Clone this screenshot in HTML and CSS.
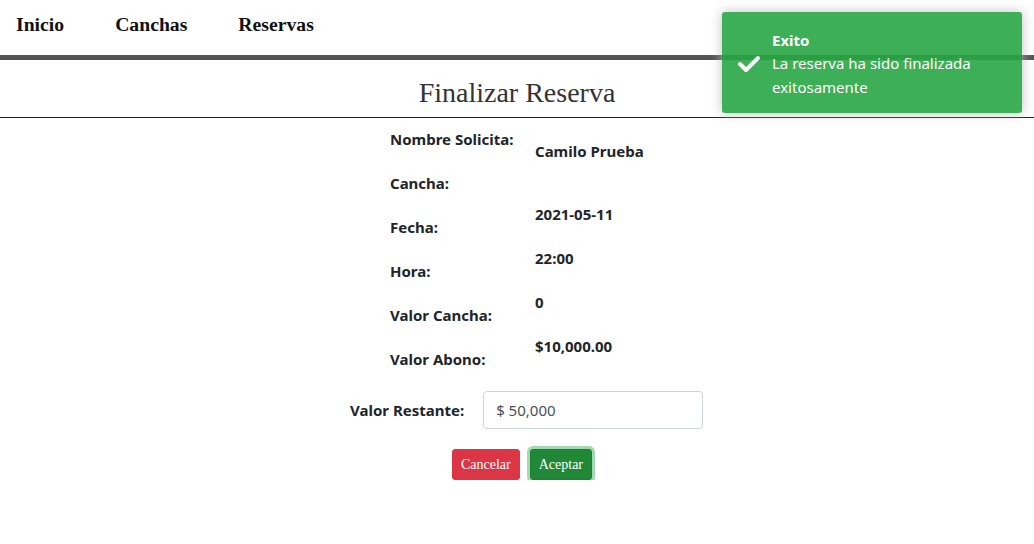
FILE: index.html
```html
<!DOCTYPE html>
<html lang="es">
<head>
<meta charset="utf-8">
<title>Finalizar Reserva</title>
<link rel="stylesheet" href="styles.css">
</head>
<body>
<nav class="nav">
  <a class="nav-link" href="#">Inicio</a>
  <a class="nav-link" href="#">Canchas</a>
  <a class="nav-link" href="#">Reservas</a>
</nav>
<h2 class="title">Finalizar Reserva</h2>
<section class="details">
  <div class="row row-first">
    <span class="label">Nombre Solicita:</span>
    <span class="value">Camilo Prueba</span>
  </div>
  <div class="row row-second">
    <span class="label">Cancha:</span>
    <span class="value"></span>
  </div>
  <div class="row">
    <span class="label">Fecha:</span>
    <span class="value">2021-05-11</span>
  </div>
  <div class="row">
    <span class="label">Hora:</span>
    <span class="value">22:00</span>
  </div>
  <div class="row">
    <span class="label">Valor Cancha:</span>
    <span class="value">0</span>
  </div>
  <div class="row">
    <span class="label">Valor Abono:</span>
    <span class="value">$10,000.00</span>
  </div>
</section>
<div class="rest">
  <label class="rest-label" for="rest">Valor Restante:</label>
  <input class="rest-input" id="rest" type="text" value="$ 50,000" readonly>
</div>
<div class="actions">
  <button class="btn btn-cancel" type="button">Cancelar</button>
  <button class="btn btn-ok" type="button">Aceptar</button>
</div>
<div class="toast">
  <svg class="toast-icon" width="24" height="20" viewBox="0 0 24 20"><polyline points="3,10 9,16 21,4" fill="none" stroke="#fff" stroke-width="4" stroke-linecap="round" stroke-linejoin="round"/></svg>
  <div class="toast-title">Exito</div>
  <div class="toast-msg">La reserva ha sido finalizada exitosamente</div>
</div>
</body>
</html>
```
FILE: styles.css
```css
* { box-sizing: border-box; }
body {
  margin: 0;
  font-family: "Noto Sans", "Open Sans", sans-serif;
  color: #212529;
  background: #fff;
}
.nav {
  display: flex;
  gap: 51px;
  height: 60px;
  padding: 12px 0 0 16px;
  border-bottom: 5px solid #555;
}
.nav-link {
  font-family: "Liberation Serif", serif;
  font-weight: bold;
  font-size: 19.7px;
  line-height: 24px;
  color: #111;
  text-decoration: none;
}
.title {
  margin: 0;
  padding: 16px 0 7px;
  font-family: "Liberation Serif", serif;
  font-weight: normal;
  font-size: 28px;
  line-height: 34px;
  text-align: center;
  color: #333;
  border-bottom: 1px solid #222;
}
.details {
  width: 254px;
  margin: 0 auto;
  font-size: 15px;
  font-weight: bold;
  line-height: 22px;
}
.row {
  display: grid;
  grid-template-columns: 145px 1fr;
  height: 44px;
  white-space: nowrap;
}
.label { padding-top: 16px; }
.value { padding-top: 3px; }
.row-first .label { padding-top: 10px; }
.row-first .value { padding-top: 22px; }
.row-second { height: 38px; }
.row-second .label { padding-top: 10px; }
.rest {
  display: flex;
  align-items: center;
  gap: 19px;
  margin: 15px 0 0 calc(50% - 167px);
}
.rest-label {
  font-size: 15px;
  font-weight: bold;
}
.rest-input {
  width: 220px;
  height: 38px;
  padding: 6px 12px;
  font-family: inherit;
  font-size: 15px;
  color: #495057;
  border: 1px solid #ced4da;
  border-radius: 4px;
  background: #fff;
}
.actions {
  display: flex;
  justify-content: center;
  gap: 10px;
  margin-top: 20px;
  padding-left: 10px;
}
.btn {
  font-family: "Liberation Serif", serif;
  font-size: 14px;
  line-height: 17px;
  padding: 6px 8px;
  color: #fff;
  border-radius: 3px;
  border: 1px solid transparent;
}
.btn-cancel { background: #dc3545; border-color: #dc3545; }
.btn-ok {
  background: #218838;
  border-color: #1e7e34;
  box-shadow: 0 0 0 3px rgba(72, 180, 97, 0.5);
}
.toast {
  position: absolute;
  top: 12px;
  left: 722px;
  width: 300px;
  height: 101px;
  padding: 17px 15px 13px 50px;
  background: #28a745;
  opacity: 0.9;
  color: #fff;
  border-radius: 3px;
  box-shadow: 0 0 12px #bbb;
  font-size: 15px;
  line-height: 24px;
}
.toast-icon {
  position: absolute;
  left: 15px;
  top: 42px;
}
.toast-title { font-weight: bold; line-height: 22px; }
```
